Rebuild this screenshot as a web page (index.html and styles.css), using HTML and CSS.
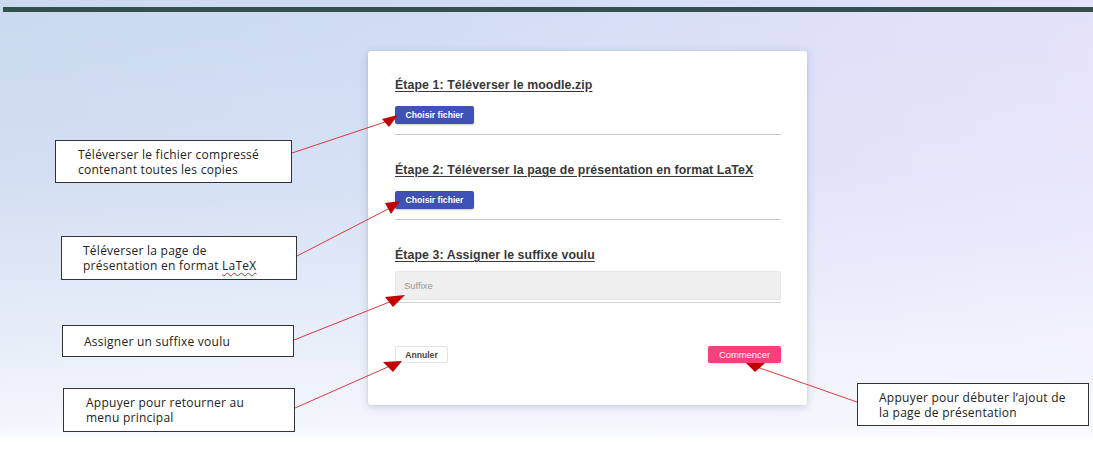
FILE: index.html
```html
<!DOCTYPE html>
<html lang="fr">
<head>
<meta charset="utf-8">
<title>Ajout de la page de présentation</title>
<link rel="stylesheet" href="styles.css">
</head>
<body>
<div class="page">
  <div class="top-strip"></div>
  <div class="topbar"></div>
  <main class="stage">
    <section class="card">
      <div class="step">
        <h2 class="step-title">Étape 1: Téléverser le moodle.zip</h2>
        <button class="btn btn-primary">Choisir fichier</button>
      </div>
      <hr class="divider">
      <div class="step">
        <h2 class="step-title">Étape 2: Téléverser la page de présentation en format LaTeX</h2>
        <button class="btn btn-primary">Choisir fichier</button>
      </div>
      <hr class="divider">
      <div class="step step-last">
        <h2 class="step-title">Étape 3: Assigner le suffixe voulu</h2>
        <div class="field"><span class="placeholder">Suffixe</span></div>
        <div class="field-line"></div>
      </div>
      <div class="actions">
        <button class="btn btn-cancel">Annuler</button>
        <button class="btn btn-accent">Commencer</button>
      </div>
    </section>
  </main>

  <div class="note note-1"><p class="note-text">Téléverser le fichier compressé<br>contenant toutes les copies</p></div>
  <div class="note note-2"><p class="note-text">Téléverser la page de<br>présentation en format <span class="spell">LaTeX</span></p></div>
  <div class="note note-3"><p class="note-text">Assigner un suffixe voulu</p></div>
  <div class="note note-4"><p class="note-text">Appuyer pour retourner au<br>menu principal</p></div>
  <div class="note note-5"><p class="note-text">Appuyer pour débuter l’ajout de<br>la page de présentation</p></div>

  <svg class="arrows" width="1093" height="450" viewBox="0 0 1093 450">
    <g stroke="#e0393b" stroke-width="1" fill="none">
      <line x1="292" y1="153" x2="388" y2="121"/>
      <line x1="297" y1="256" x2="390" y2="208"/>
      <line x1="294" y1="340" x2="392" y2="301"/>
      <line x1="295" y1="408" x2="390" y2="366"/>
      <line x1="857" y1="402" x2="757" y2="367"/>
    </g>
    <g fill="#c00000">
      <polygon points="382,119 398,115 389,127"/>
      <polygon points="385,203 400,201 391,214"/>
      <polygon points="385,297 405,295 393,307"/>
      <polygon points="383,362 402,361 393,372"/>
      <polygon points="746,363 765,363 755,372"/>
    </g>
  </svg>
</div>
</body>
</html>
```

FILE: styles.css
```css
html, body {
  margin: 0;
  padding: 0;
  background: #ffffff;
}

body {
  font-family: "Liberation Sans", Arial, sans-serif;
}

.page {
  position: relative;
  width: 1093px;
  height: 450px;
  overflow: hidden;
  background:
    linear-gradient(180deg, rgba(255,255,255,0) 0%, rgba(255,255,255,0.15) 40%, rgba(250,251,254,0.85) 95%, #ffffff 98%),
    linear-gradient(90deg, #cbd9f0 0%, #cfdcf4 35%, #dcdff8 70%, #e5e2fb 100%);
}

.top-strip {
  height: 7px;
}

.topbar {
  height: 5px;
  margin-left: 3px;
  background: #33504e;
}

.stage {
  display: flex;
  padding-top: 39px;
  padding-left: 368px;
}

.card {
  width: 439px;
  height: 354px;
  box-sizing: border-box;
  padding: 27px 26px 0 27px;
  background: #ffffff;
  border-radius: 3px;
  box-shadow: 0 2px 8px rgba(60, 70, 110, 0.22), 0 0 2px rgba(60, 70, 110, 0.12);
  display: flex;
  flex-direction: column;
}

.step {
  display: flex;
  flex-direction: column;
  align-items: flex-start;
}

.step-title {
  margin: 0;
  font-size: 12.3px;
  line-height: 14px;
  font-weight: 700;
  color: #383838;
  text-decoration: underline;
  text-underline-offset: 2px;
  letter-spacing: 0.1px;
}

.step .btn {
  margin-top: 14px;
}

.divider {
  width: 100%;
  margin: 10px 0 28px 0;
  border: 0;
  border-top: 1px solid #c9c9c9;
  height: 0;
}

.btn {
  font-family: "Liberation Sans", Arial, sans-serif;
  font-size: 8.6px;
  font-weight: 700;
  border-radius: 2px;
  cursor: pointer;
  padding: 0;
}

.btn-primary {
  width: 79px;
  height: 18px;
  background: #3f51b5;
  color: #ffffff;
  border: 0;
  box-shadow: 0 1px 2px rgba(0,0,0,0.2);
}

.step-last {
  width: 100%;
  align-items: stretch;
}

.field {
  margin-top: 9px;
  height: 29px;
  background: #efefef;
  border: 1px solid #e6e6e6;
  border-radius: 3px 3px 0 0;
  box-sizing: border-box;
  display: flex;
  align-items: center;
  padding-left: 8px;
}

.placeholder {
  font-size: 9.5px;
  color: #9a9a9a;
}

.field-line {
  margin-top: 2px;
  height: 1px;
  background: #d0d0d0;
}

.actions {
  margin-top: 43px;
  display: flex;
  justify-content: space-between;
  align-items: center;
}

.btn-cancel {
  width: 53px;
  height: 17px;
  background: #ffffff;
  color: #444444;
  border: 1px solid #e3e3e3;
}

.btn-accent {
  width: 73px;
  height: 17px;
  background: #f5407c;
  color: #ffffff;
  border: 0;
  font-size: 9.4px;
  font-weight: 400;
  box-shadow: 0 1px 2px rgba(0,0,0,0.15);
}

.note {
  position: absolute;
  box-sizing: border-box;
  background: #ffffff;
  border: 1px solid #333333;
  display: flex;
  align-items: center;
}

.note-text {
  margin: 0;
  font-family: "Open Sans", Lato, sans-serif;
  font-size: 12px;
  line-height: 15px;
  letter-spacing: 0.25px;
  color: #222222;
}

.note-1 { left: 55px;  top: 140px; width: 237px; height: 43px; padding-left: 22px; }
.note-2 { left: 61px;  top: 236px; width: 236px; height: 44px; padding-left: 21px; }
.note-3 { left: 62px;  top: 325px; width: 232px; height: 32px; padding-left: 21px; }
.note-4 { left: 63px;  top: 388px; width: 232px; height: 44px; padding-left: 22px; }
.note-5 { left: 857px; top: 383px; width: 232px; height: 43px; padding-left: 21px; }

.spell {
  text-decoration: underline wavy #e02020;
  text-decoration-thickness: 1px;
  text-underline-offset: 2px;
}

.arrows {
  position: absolute;
  left: 0;
  top: 0;
  pointer-events: none;
}
```
